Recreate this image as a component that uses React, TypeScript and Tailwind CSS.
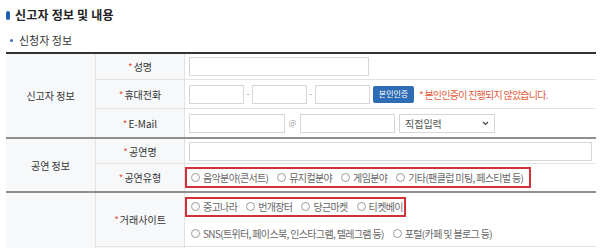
import React from "react";

function Radio({ label }: { label: string }) {
  return (
    <span className="flex items-center gap-[3px] whitespace-nowrap">
      <span className="inline-block w-[9px] h-[9px] rounded-full border border-[#9a9a9a] bg-white" />
      <span className="tracking-[-0.65px]">{label}</span>
    </span>
  );
}

function Label({ text }: { text: string }) {
  return (
    <div className="w-[89px] shrink-0 border-r border-[#e2e2e2] bg-[#f7f8fa] flex items-center justify-center text-[10px] text-[#333]">
      <span className="text-[#e5553a] mr-[1px]">*</span>
      <span>{text}</span>
    </div>
  );
}

function Input({ w }: { w: string }) {
  return <div className={`${w} h-[19px] border border-[#d6d6d6] bg-white shrink-0`} />;
}

export default function App() {
  return (
    <div className="w-[600px] h-[248px] overflow-hidden bg-white font-['Noto_Sans_CJK_KR','Noto_Sans',sans-serif] text-[#333]">
      <div className="h-[30px] flex items-center pl-[6px] gap-[5px]">
        <span className="inline-block w-[4px] h-[9px] rounded-full bg-[#1b62b5]" />
        <span className="text-[12px] font-bold text-[#222] leading-none tracking-[0.2px]">신고자 정보 및 내용</span>
      </div>
      <div className="h-[20px] flex items-center pl-[10px] gap-[6px]">
        <span className="inline-block w-[3px] h-[3px] rounded-full bg-[#3a6fb0]" />
        <span className="text-[11px] text-[#333] leading-none">신청자 정보</span>
      </div>
      <div className="ml-[6px] mt-[2px] w-[590px] border-t-2 border-[#333]">
        {/* group 1 */}
        <div className="flex border-b-2 border-[#8e8e8e]">
          <div className="w-[90px] shrink-0 bg-[#f7f8fa] border-r border-[#e2e2e2] flex items-center justify-center text-[10px]">
            신고자 정보
          </div>
          <div className="flex-1 flex flex-col">
            <div className="h-[26px] flex border-b border-[#e2e2e2]">
              <Label text="성명" />
              <div className="flex-1 flex items-center pl-[4px]">
                <Input w="w-[180px]" />
              </div>
            </div>
            <div className="h-[29px] flex border-b border-[#e2e2e2]">
              <Label text="휴대전화" />
              <div className="flex-1 flex items-center pl-[4px]">
                <Input w="w-[55px]" />
                <span className="w-[8px] text-center text-[9px] text-[#999]">-</span>
                <Input w="w-[55px]" />
                <span className="w-[8px] text-center text-[9px] text-[#999]">-</span>
                <Input w="w-[55px]" />
                <div className="ml-[3px] w-[41px] h-[17px] rounded-[2px] bg-[#2e6db5] text-white text-[8px] flex items-center justify-center">
                  본인인증
                </div>
                <span className="ml-[5px] text-[10px] text-[#e45a3a] whitespace-nowrap tracking-[-0.75px]">* 본인인증이 진행되지 않았습니다.</span>
              </div>
            </div>
            <div className="h-[28px] flex">
              <Label text="E-Mail" />
              <div className="flex-1 flex items-center pl-[4px]">
                <Input w="w-[96px]" />
                <span className="w-[15px] text-center text-[8px] text-[#999]">@</span>
                <Input w="w-[95px]" />
                <div className="ml-[4px] w-[96px] h-[19px] border border-[#d6d6d6] bg-white flex items-center justify-between px-[5px] text-[10px] text-[#555]">
                  <span>직접입력</span>
                  <svg width="7" height="5" viewBox="0 0 7 5">
                    <path d="M1 1l2.5 2.5L6 1" fill="none" stroke="#444" strokeWidth="1.2" />
                  </svg>
                </div>
              </div>
            </div>
          </div>
        </div>
        {/* group 2 */}
        <div className="flex border-b-2 border-[#8e8e8e]">
          <div className="w-[90px] shrink-0 bg-[#f7f8fa] border-r border-[#e2e2e2] flex items-center justify-center text-[10px]">
            공연 정보
          </div>
          <div className="flex-1 flex flex-col">
            <div className="h-[25px] flex border-b border-[#e2e2e2]">
              <Label text="공연명" />
              <div className="flex-1 flex items-center pl-[4px]">
                <Input w="w-[403px]" />
              </div>
            </div>
            <div className="h-[27px] flex">
              <Label text="공연유형" />
              <div className="flex-1 flex items-center">
                <div className="w-[346px] h-[21px] border-2 border-[#d2313a] flex items-center pl-[4px] gap-[9px] text-[10px] text-[#666]">
                  <Radio label="음악분야(콘서트)" />
                  <Radio label="뮤지컬분야" />
                  <Radio label="게임분야" />
                  <Radio label="기타(팬클럽 미팅, 페스티벌 등)" />
                </div>
              </div>
            </div>
          </div>
        </div>
        {/* group 3 */}
        <div className="flex h-[80px]">
          <div className="w-[90px] shrink-0 bg-[#f7f8fa] border-r border-[#e2e2e2]" />
          <div className="flex-1 flex flex-col">
            <div className="h-[54px] flex border-b border-[#e2e2e2]">
              <Label text="거래사이트" />
              <div className="flex-1 flex flex-col text-[10px] text-[#666]">
                <div className="h-[27px] flex items-center">
                  <div className="w-[221px] h-[20px] border-2 border-[#d2313a] flex items-center pl-[4px] gap-[9px]">
                    <Radio label="중고나라" />
                    <Radio label="번개장터" />
                    <Radio label="당근마켓" />
                    <Radio label="티켓베이" />
                  </div>
                </div>
                <div className="flex-1 flex items-center pl-[6px] gap-[9px]">
                  <Radio label="SNS(트위터, 페이스북, 인스타그램, 텔레그램 등)" />
                  <Radio label="포털(카페 및 블로그 등)" />
                </div>
              </div>
            </div>
            <div className="flex-1 flex">
              <div className="w-[89px] shrink-0 border-r border-[#e2e2e2] bg-[#f7f8fa]" />
            </div>
          </div>
        </div>
      </div>
    </div>
  );
}
